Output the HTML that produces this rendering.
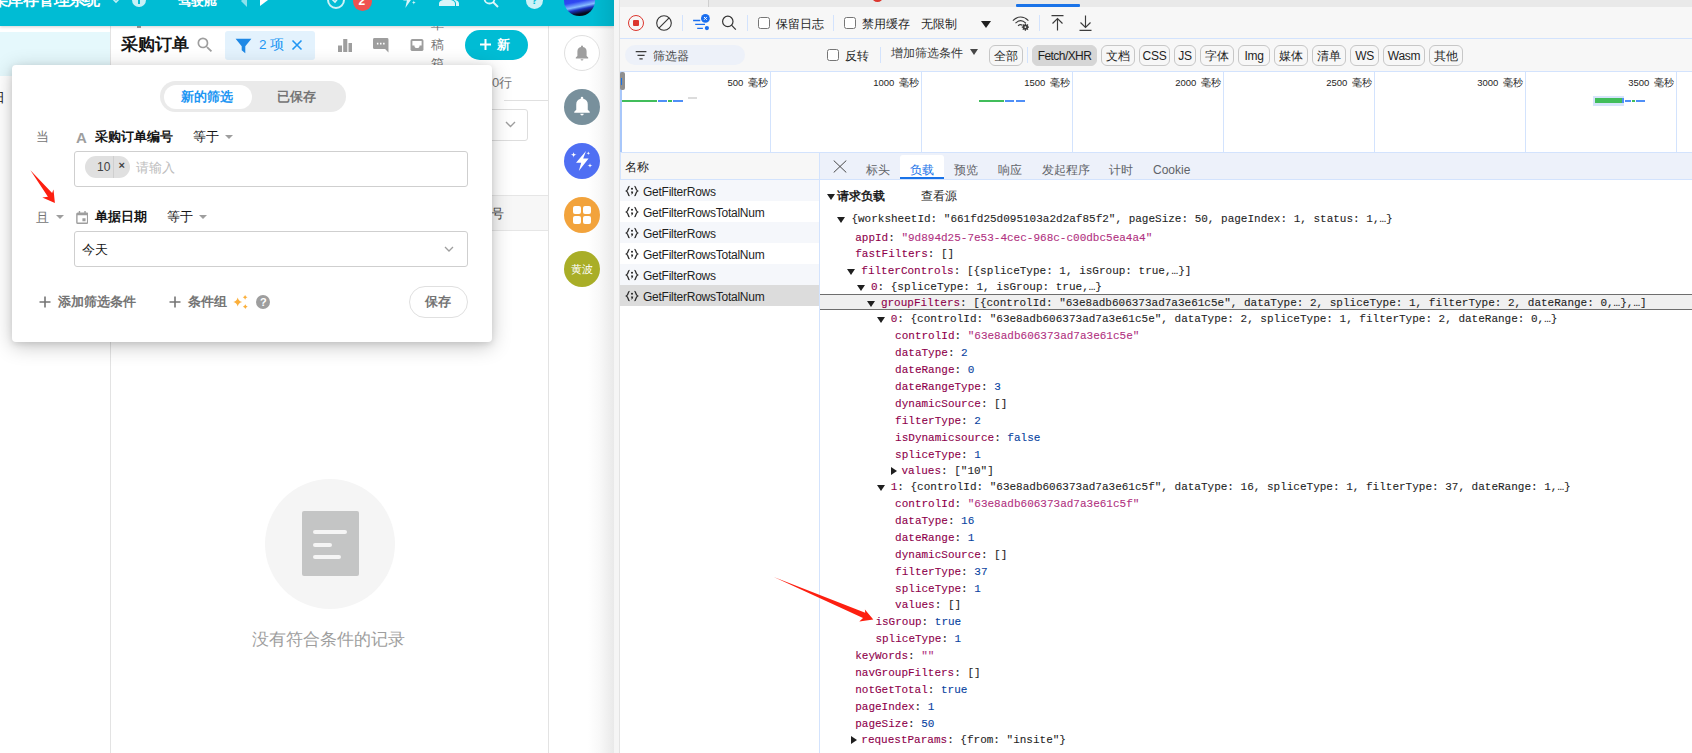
<!DOCTYPE html>
<html lang="zh">
<head>
<meta charset="utf-8">
<title>采购订单</title>
<style>
*{box-sizing:border-box;margin:0;padding:0}
html,body{width:1692px;height:753px;overflow:hidden;background:#fff}
body{position:relative;font-family:"Liberation Sans",sans-serif;font-size:12px;color:#1f1f1f}
.a{position:absolute;white-space:nowrap}
.t{position:absolute;white-space:nowrap;line-height:1}
/* ---------- left app ---------- */
#app{left:0;top:0;width:614px;height:753px;background:#fff;overflow:hidden}
#topbar{left:0;top:0;width:614px;height:26px;background:#00bcd4;box-shadow:0 1px 3px rgba(0,0,0,.18)}
#leftsel{left:0;top:32px;width:110px;height:44px;background:#e5f8fc}
.vline{width:1px;background:#e3e3e3}
#panel{left:12px;top:65px;width:480px;height:277px;background:#fff;border-radius:4px;box-shadow:0 4px 20px rgba(0,0,0,.23),0 2px 6px rgba(0,0,0,.1)}
.g7{color:#757575}
.g9{color:#9e9e9e}
.b{font-weight:bold}
.box{border:1px solid #cfcfcf;border-radius:3px;background:#fff}
.circ{border-radius:50%}
/* ---------- devtools ---------- */
#dt{left:620px;top:0;width:1072px;height:753px;background:#fff;overflow:hidden}
.sep{width:1px;background:#d3e3fd}
.hl{height:1px;background:#d3e3fd}
.cb{width:12px;height:12px;border:1px solid #767676;border-radius:2.5px;background:#fff}
.chip{height:21px;border:1px solid #c7c7c7;border-radius:6px;top:45px;text-align:center;line-height:21px;font-size:12px;color:#1f1f1f}
.chip.l{letter-spacing:-.3px}
.row{left:0;width:199px;height:21px}
.tl{top:78px;font-size:9.500px;text-align:right;color:#1f1f1f;word-spacing:2px}
.tb{top:164px;font-size:12px;color:#5f6368}
.nm{font-size:12px;letter-spacing:-.25px}
.mono{font-family:"Liberation Mono",monospace;font-size:11px;line-height:13px;color:#1f1f1f;-webkit-text-stroke:.1px}
.k{color:#8e004b}
.s{color:#b1317f}
.n{color:#0842a0}
.tri{width:0;height:0;border-left:4px solid transparent;border-right:4px solid transparent;border-top:6px solid #1f1f1f}
.trir{width:0;height:0;border-top:4px solid transparent;border-bottom:4px solid transparent;border-left:6px solid #1f1f1f}
</style>
</head>
<body>
<!-- ================= LEFT APP ================= -->
<div id="app" class="a">
<!-- left nav -->
<div id="leftsel" class="a"></div>
<div class="t" style="left:-8px;top:91px;font-size:13px;color:#151515">日</div>
<div class="a vline" style="left:110px;top:26px;height:727px"></div>
<!-- main header -->
<div class="a" style="left:137px;top:26px;width:4px;height:2px;background:#9e9e9e"></div>
<div class="t b" style="left:121px;top:36px;font-size:17px;color:#151515">采购订单</div>
<svg class="a" style="left:194.500px;top:34.500px" width="20" height="20" viewBox="0 0 24 24"><path fill="#9e9e9e" d="M15.5 14h-.79l-.28-.27A6.47 6.47 0 0 0 16 9.5 6.5 6.5 0 1 0 9.500 16c1.610 0 3.090-.590 4.230-1.570l.27.28v.79l5 4.990L20.490 19l-4.990-5zm-6 0C7.010 14 5 11.990 5 9.500S7.010 5 9.500 5 14 7.010 14 9.500 11.990 14 9.500 14z"/></svg>
<div class="a" style="left:225px;top:31px;width:90px;height:29px;background:#e3f2fd;border-radius:3px"></div>
<svg class="a" style="left:235px;top:38px" width="17" height="16" viewBox="0 0 17 16"><path fill="#1e88e5" d="M0.600 0.800H16.400L10.300 8.200V15.200L6.700 12.300V8.200Z"/></svg>
<div class="t" style="left:259px;top:38px;font-size:13.500px;color:#2196f3">2 项</div>
<svg class="a" style="left:291px;top:39px" width="12" height="12" viewBox="0 0 12 12"><path stroke="#2196f3" stroke-width="1.600" fill="none" d="M1.500 1.500L10.500 10.500M10.500 1.500L1.500 10.500"/></svg>
<!-- header icons -->
<svg class="a" style="left:338px;top:38.500px" width="14" height="13.400" viewBox="0 0 14 13.400"><path fill="#9e9e9e" d="M0 6.500h4v6.900H0zM5.200 0h4.100v13.400H5.200zM10.500 4H14v9.400h-3.500z"/></svg>
<svg class="a" style="left:373px;top:38px" width="15.500" height="14.500" viewBox="0 0 16 15"><path fill="#9e9e9e" d="M1.500 0h13A1.500 1.500 0 0 1 16 1.500V15l-3.500-3.500h-11A1.500 1.500 0 0 1 0 10V1.500A1.500 1.500 0 0 1 1.500 0z"/><path fill="#fff" d="M4 5h1.600v1.600H4zM7.200 5h1.600v1.600H7.200zM10.400 5h1.600v1.600h-1.600z"/></svg>
<svg class="a" style="left:410px;top:39px" width="14" height="12" viewBox="0 0 14 13"><path fill="#9e9e9e" d="M2 0h10a2 2 0 0 1 2 2v9a2 2 0 0 1-2 2H2a2 2 0 0 1-2-2V2a2 2 0 0 1 2-2z"/><path fill="#fff" d="M2 2.200h10V7H9.800a2.800 2.800 0 0 1-5.600 0H2z"/></svg>
<div class="t g7" style="left:430.500px;top:15px;font-size:13px;line-height:19.500px;white-space:normal;width:13px">草稿箱</div>
<div class="a" style="left:465px;top:30px;width:63px;height:30px;border-radius:15px;background:#00bcd4"></div>
<svg class="a" style="left:479px;top:38px" width="13" height="13" viewBox="0 0 13 13"><path stroke="#fff" stroke-width="2" fill="none" d="M6.500 1v11M1 6.500h11"/></svg>
<div class="t b" style="left:497px;top:38px;font-size:13px;color:#fff">新</div>
<!-- content behind panel -->
<div class="t g7" style="left:492px;top:76px;font-size:13px">0行</div>
<div class="a" style="left:504px;top:100px;width:44px;height:1px;background:#e0e0e0"></div>
<div class="a box" style="left:430px;top:109px;width:98px;height:32px;border-color:#ddd"></div>
<svg class="a" style="left:505px;top:121px" width="11" height="7" viewBox="0 0 11 7"><path stroke="#9e9e9e" stroke-width="1.400" fill="none" d="M1 1l4.500 4.500L10 1"/></svg>
<div class="a" style="left:111px;top:195px;width:437px;height:36px;background:#f7f7f7;border-top:1px solid #e6e6e6;border-bottom:1px solid #e6e6e6"></div>
<div class="t" style="left:491px;top:207px;font-size:13px;color:#424242">号</div>
<!-- empty state -->
<div class="a circ" style="left:265px;top:479px;width:130px;height:130px;background:#f5f5f5"></div>
<div class="a" style="left:302px;top:511px;width:57px;height:65px;background:#c4c5c5;border-radius:2px"></div>
<div class="a" style="left:313px;top:530px;width:34px;height:4px;border-radius:2px;background:#f5f5f5"></div>
<div class="a" style="left:313px;top:543px;width:19px;height:4px;border-radius:2px;background:#f5f5f5"></div>
<div class="a" style="left:313px;top:555px;width:28px;height:4px;border-radius:2px;background:#f5f5f5"></div>
<div class="t g9" style="left:252px;top:631px;font-size:17px">没有符合条件的记录</div>
<!-- right sidebar -->
<div class="a vline" style="left:548px;top:26px;height:727px"></div>
<div class="a" style="left:588px;top:26px;width:26px;height:727px;background:linear-gradient(90deg,#fff 0,#f8f8f8 45%,#e9e9e9 100%)"></div>
<div class="a circ" style="left:564px;top:35px;width:36px;height:36px;border:1px solid #e0e0e0;background:#fff"></div>
<svg class="a" style="left:575px;top:45px" width="14" height="16" viewBox="0 0 14 16"><path fill="#9e9e9e" d="M7 0.500a1 1 0 0 1 1 1v.6A4.600 4.600 0 0 1 11.600 6.600V11l1.600 1.600v.8H.8v-.8L2.400 11V6.600A4.600 4.600 0 0 1 6 2.100V1.500a1 1 0 0 1 1-1zM5.600 14.200h2.800a1.400 1.400 0 0 1-2.800 0z"/></svg>
<div class="a circ" style="left:564px;top:88.500px;width:36px;height:36px;background:#78909c"></div>
<svg class="a" style="left:573px;top:96px" width="18" height="20" viewBox="0 0 14 16"><path fill="#fff" d="M7 0.500a1 1 0 0 1 1 1v.6A4.600 4.600 0 0 1 11.600 6.600V11l1.600 1.600v.8H.8v-.8L2.400 11V6.600A4.600 4.600 0 0 1 6 2.100V1.500a1 1 0 0 1 1-1zM5.600 14.200h2.800a1.400 1.400 0 0 1-2.800 0z"/></svg>
<div class="a circ" style="left:564px;top:143px;width:36px;height:36px;background:#4f6ff3"></div>
<svg class="a" style="left:570px;top:149px" width="24" height="24" viewBox="0 0 24 24"><path fill="#fff" d="M16 2L6 13.800h5.200L8.800 22l9.800-12.600h-5.400z"/><path fill="#fff" d="M3.6 2.7Q3.6 5.7 6.6 5.7Q3.6 5.7 3.6 8.7Q3.6 5.7 0.6 5.7Q3.6 5.7 3.6 2.7ZM18.3 2.4Q18.3 4.2 20.1 4.2Q18.3 4.2 18.3 6Q18.3 4.2 16.5 4.2Q18.3 4.2 18.3 2.4ZM20 14.1Q20 16.6 22.5 16.6Q20 16.6 20 19.1Q20 16.6 17.5 16.6Q20 16.6 20 14.1Z"/></svg>
<div class="a circ" style="left:564px;top:197px;width:36px;height:36px;background:#f2a33c"></div>
<div class="a" style="left:573px;top:206px;width:8px;height:8px;background:#fff;border-radius:2px"></div>
<div class="a" style="left:583px;top:206px;width:8px;height:8px;background:#fff;border-radius:2px"></div>
<div class="a" style="left:573px;top:216px;width:8px;height:8px;background:#fff;border-radius:2px"></div>
<div class="a" style="left:583px;top:216px;width:8px;height:8px;background:#fff;border-radius:2px"></div>
<div class="a circ" style="left:564px;top:251px;width:36px;height:36px;background:#a9ae27"></div>
<div class="t" style="left:571px;top:264px;font-size:11px;color:#fff;letter-spacing:-.5px">黄波</div>
<!-- top bar -->
<div id="topbar" class="a"></div>
<div class="a" style="left:592px;top:0;width:22px;height:26px;background:linear-gradient(90deg,rgba(0,0,0,0),rgba(0,0,0,.085))"></div>
<div class="t b" style="left:-8px;top:-8.500px;font-size:16px;color:#fff;letter-spacing:-.6px">某库存管理系统</div>
<svg class="a" style="left:111px;top:-3px" width="10" height="7" viewBox="0 0 10 7"><path stroke="rgba(255,255,255,.75)" stroke-width="1.600" fill="none" d="M1 1l4 4 4-4"/></svg>
<div class="a circ" style="left:132px;top:-7.500px;width:14px;height:14px;background:rgba(255,255,255,.78)"></div>
<div class="a" style="left:138.200px;top:-2px;width:1.600px;height:5.500px;background:#00bcd4"></div>
<div class="t b" style="left:177.500px;top:-6.500px;font-size:13px;color:#fff">驾驶舱</div>
<div class="a" style="left:241px;top:-5.500px;width:0;height:0;border-top:6px solid transparent;border-bottom:6px solid transparent;border-right:6.500px solid rgba(255,255,255,.55)"></div>
<div class="a" style="left:259.500px;top:-6px;width:0;height:0;border-top:6.500px solid transparent;border-bottom:6.500px solid transparent;border-left:8px solid #fff"></div>
<div class="a circ" style="left:327px;top:-9px;width:18px;height:18px;border:2px solid rgba(255,255,255,.8)"></div>
<svg class="a" style="left:331px;top:-3px" width="10" height="8" viewBox="0 0 10 8"><path stroke="rgba(255,255,255,.85)" stroke-width="1.600" fill="none" d="M1 2l3 3 5-6"/></svg>
<div class="a circ" style="left:352.500px;top:-8.500px;width:19px;height:19px;background:#ef5350"></div>
<div class="t b" style="left:358.500px;top:-5px;font-size:12px;color:#fff">2</div>
<svg class="a" style="left:400.500px;top:-9px" width="15" height="17" viewBox="0 0 14 16"><path fill="rgba(255,255,255,.85)" d="M8 0L2 9h3.500L4 16l7-10H7.300z"/><path fill="rgba(255,255,255,.85)" d="M12 9l.5 1.300 1.300.5-1.300.5L12 12.600l-.5-1.300-1.300-.5 1.300-.5z"/></svg>
<svg class="a" style="left:439px;top:-8px" width="20" height="14" viewBox="0 0 20 14"><path fill="rgba(255,255,255,.85)" d="M0 14v-2.500C0 9 4 7.500 8 7.500s8 1.500 8 4V14zM13 7.300c3 .2 7 1.500 7 4.200V14h-3v-2.500c0-1.800-1.500-3.200-4-4.200z"/></svg>
<svg class="a" style="left:483px;top:-8px" width="16" height="16" viewBox="0 0 16 16"><circle cx="6.500" cy="6.500" r="5" stroke="rgba(255,255,255,.85)" stroke-width="1.800" fill="none"/><path stroke="rgba(255,255,255,.85)" stroke-width="2" d="M10 10l5 5"/></svg>
<div class="a circ" style="left:525.500px;top:-8px;width:17px;height:17px;background:rgba(255,255,255,.8)"></div>
<div class="t b" style="left:531px;top:-5px;font-size:11px;color:#00bcd4">?</div>
<div class="a circ" style="left:564px;top:-15px;width:31px;height:31px;background:linear-gradient(168deg,#2630e0 0,#2f48f2 52%,#86bcff 66%,#1a34c4 74%,#070a1c 86%,#030408 100%)"></div>
<!-- filter panel -->
<div id="panel" class="a"></div>
<!-- segmented control -->
<div class="a" style="left:160px;top:81px;width:186px;height:31px;border-radius:16px;background:#eaeaea"></div>
<div class="a" style="left:164px;top:85px;width:88px;height:24px;border-radius:12px;background:#fff"></div>
<div class="t b" style="left:181px;top:90px;font-size:13px;color:#2196f3">新的筛选</div>
<div class="t b g7" style="left:277px;top:90px;font-size:13px">已保存</div>
<!-- row 1 -->
<div class="t g7" style="left:36px;top:130px;font-size:13px">当</div>
<div class="t b g9" style="left:76px;top:130px;font-size:15px">A</div>
<div class="t b" style="left:95px;top:130px;font-size:13px;color:#151515">采购订单编号</div>
<div class="t" style="left:193px;top:130px;font-size:13px;color:#151515">等于</div>
<div class="a" style="left:225px;top:135px;width:0;height:0;border-left:4.500px solid transparent;border-right:4.500px solid transparent;border-top:4.500px solid #9e9e9e"></div>
<div class="a box" style="left:74px;top:151px;width:394px;height:36px"></div>
<div class="a" style="left:85px;top:156px;width:45px;height:22px;border-radius:11px;background:#e0e0e0"></div>
<div class="t" style="left:97px;top:161px;font-size:12px;color:#424242">10</div>
<div class="a" style="left:113px;top:156px;width:1px;height:22px;background:#cfcfcf"></div>
<div class="t b" style="left:118.500px;top:160px;font-size:11px;color:#424242">×</div>
<div class="t" style="left:136px;top:161px;font-size:13px;color:#bdbdbd">请输入</div>
<!-- red arrow 1 -->
<svg class="a" style="left:26px;top:166px" width="34" height="42" viewBox="0 0 34 42"><path fill="#fd1f10" d="M4.400 4.200L26.100 27L27.500 23.600L28.900 37L16.300 31.500L21.900 30.700Z"/></svg>
<!-- row 2 -->
<div class="t g7" style="left:36px;top:211px;font-size:13px">且</div>
<div class="a" style="left:56px;top:215px;width:0;height:0;border-left:4.500px solid transparent;border-right:4.500px solid transparent;border-top:4.500px solid #9e9e9e"></div>
<svg class="a" style="left:75.500px;top:211px" width="12.500" height="13" viewBox="0 0 14 15"><path fill="#9e9e9e" d="M3 0h1.600v1.600h4.800V0H11v1.600h1.200A1.800 1.800 0 0 1 14 3.400v9.800A1.800 1.800 0 0 1 12.200 15H1.800A1.800 1.800 0 0 1 0 13.200V3.400A1.800 1.800 0 0 1 1.800 1.600H3zM1.600 5v8.200h10.800V5zM7.200 8.400h3.600v3.400H7.200z"/></svg>
<div class="t b" style="left:95px;top:210px;font-size:13px;color:#151515">单据日期</div>
<div class="t" style="left:167px;top:210px;font-size:13px;color:#151515">等于</div>
<div class="a" style="left:199px;top:215px;width:0;height:0;border-left:4.500px solid transparent;border-right:4.500px solid transparent;border-top:4.500px solid #9e9e9e"></div>
<div class="a box" style="left:74px;top:231px;width:394px;height:36px"></div>
<div class="t" style="left:82px;top:243px;font-size:13px;color:#151515">今天</div>
<svg class="a" style="left:444px;top:246px" width="10" height="6" viewBox="0 0 10 6"><path stroke="#9e9e9e" stroke-width="1.300" fill="none" d="M1 1l4 4 4-4"/></svg>
<!-- footer -->
<svg class="a" style="left:39px;top:296px" width="12" height="12" viewBox="0 0 12 12"><path stroke="#757575" stroke-width="1.600" fill="none" d="M6 .5v11M.5 6h11"/></svg>
<div class="t b g7" style="left:58px;top:295px;font-size:13px">添加筛选条件</div>
<svg class="a" style="left:169px;top:296px" width="12" height="12" viewBox="0 0 12 12"><path stroke="#757575" stroke-width="1.600" fill="none" d="M6 .5v11M.5 6h11"/></svg>
<div class="t b g7" style="left:188px;top:295px;font-size:13px">条件组</div>
<svg class="a" style="left:233px;top:293px" width="16" height="18" viewBox="0 0 16 18"><path fill="#fbaf3a" d="M4.7 4.4Q5.6 8.0 9.2 8.9Q5.6 9.8 4.7 13.4Q3.8 9.8 0.2 8.9Q3.8 8.0 4.7 4.4ZM12.1 1.9Q12.6 3.8 14.5 4.3Q12.6 4.8 12.1 6.7Q11.6 4.8 9.7 4.3Q11.6 3.8 12.1 1.9ZM12.3 11.3Q12.8 13.2 14.7 13.7Q12.8 14.2 12.3 16.1Q11.8 14.2 9.9 13.7Q11.8 13.2 12.3 11.3Z"/></svg>
<div class="a circ" style="left:256px;top:295px;width:14px;height:14px;background:#9e9e9e"></div>
<div class="t b" style="left:260px;top:297px;font-size:11px;color:#fff">?</div>
<div class="a" style="left:408.500px;top:286px;width:59.500px;height:31.500px;border-radius:16px;border:1px solid #e0e0e0;background:#fff"></div>
<div class="t b g7" style="left:425px;top:295px;font-size:13px">保存</div>
</div>
<!-- splitter strip -->
<div class="a" style="left:614px;top:0;width:5px;height:753px;background:#f5f5f5"></div>
<div class="a" style="left:619px;top:0;width:1px;height:753px;background:#e3e3e3"></div>
<!-- ================= DEVTOOLS ================= -->
<div id="dt" class="a">
<div class="a" style="left:0;top:0;width:1072px;height:753px;background:#fff"></div>
<!-- top band -->
<div class="a" style="left:0;top:0;width:1072px;height:7px;background:#e9e9e9"></div>
<div class="a" style="left:0;top:0;width:88px;height:7px;background:#eeeeee"></div>
<div class="a" style="left:88px;top:0;width:1px;height:7px;background:#cfcfcf"></div>
<div class="a circ" style="left:252px;top:-9px;width:11px;height:11px;background:#dc362e"></div>
<div class="a" style="left:396px;top:0;width:64px;height:7px;background:#ebebeb"></div>
<div class="a" style="left:396px;top:4px;width:64px;height:3px;background:#1a73e8;border-radius:1px"></div>
<!-- toolbar -->
<div class="a" style="left:0;top:7px;width:1072px;height:31px;background:#f7f7f7"></div>
<div class="a hl" style="left:0;top:38px;width:1072px"></div>
<div class="a circ" style="left:8px;top:15px;width:16px;height:16px;border:1.400px solid #dc362e"></div>
<div class="a" style="left:13.100px;top:20.100px;width:5.800px;height:5.800px;background:#dc362e;border-radius:1px"></div>
<svg class="a" style="left:36px;top:15px" width="16" height="16" viewBox="0 0 16 16"><circle cx="8" cy="8" r="7.300" stroke="#333" stroke-width="1.100" fill="none"/><path stroke="#333" stroke-width="1.100" d="M2.900 13.100L13.100 2.900"/></svg>
<div class="a sep" style="left:62px;top:15px;height:16px"></div>
<svg class="a" style="left:72px;top:13px" width="20" height="20" viewBox="0 0 20 20"><path stroke="#1a6ff0" stroke-width="1.300" fill="none" d="M1.100 7.500h7.200M3.200 11.300h9.800M5.200 15.400h5.700"/><circle cx="13.400" cy="5.400" r="4.400" fill="#1a6ff0"/><path stroke="#fff" stroke-width="1" d="M12 4l2.800 2.800M14.800 4L12 6.800"/><circle cx="14.900" cy="15.100" r="2.100" fill="#1a6ff0"/></svg>
<svg class="a" style="left:100px;top:14px" width="17" height="17" viewBox="0 0 17 17"><circle cx="7.800" cy="7.400" r="5.200" stroke="#333" stroke-width="1.200" fill="none"/><path stroke="#333" stroke-width="1.200" d="M11.500 11.100l4.300 4.600"/></svg>
<div class="a sep" style="left:127px;top:15px;height:16px"></div>
<div class="a cb" style="left:138px;top:17px"></div>
<div class="t" style="left:156px;top:18px;font-size:12px">保留日志</div>
<div class="a sep" style="left:213px;top:15px;height:16px"></div>
<div class="a cb" style="left:224px;top:17px"></div>
<div class="t" style="left:242px;top:18px;font-size:12px">禁用缓存</div>
<div class="t" style="left:301px;top:18px;font-size:12px">无限制</div>
<div class="a" style="left:361px;top:21px;width:0;height:0;border-left:5.500px solid transparent;border-right:5.500px solid transparent;border-top:7px solid #1f1f1f"></div>
<svg class="a" style="left:392px;top:15px" width="19" height="16.400" viewBox="0 0 22 19"><path stroke="#3c3c3c" stroke-width="1.300" fill="none" d="M1 6.500C6.500 1 13.500 1 19 6.500M4 9.500C8 5.500 12 5.500 16 9.500M7 12.500C8.800 10.700 10.500 10.700 12 12"/><circle cx="15.500" cy="14" r="3.100" fill="#3c3c3c"/><circle cx="15.500" cy="14" r="1.100" fill="#f7f7f7"/><path stroke="#3c3c3c" stroke-width="1.500" d="M15.500 9.800v8.400M11.300 14h8.400M12.500 11l6 6M18.500 11l-6 6"/><circle cx="15.500" cy="14" r="1.100" fill="#f7f7f7"/></svg>
<div class="a sep" style="left:419px;top:15px;height:16px"></div>
<svg class="a" style="left:430px;top:15px" width="15" height="16" viewBox="0 0 15 16"><path stroke="#3c3c3c" stroke-width="1.150" fill="none" d="M1.500 .6h12M7.500 3.500v12M2.500 8.500l5-5 5 5"/></svg>
<svg class="a" style="left:458px;top:15px" width="15" height="16" viewBox="0 0 15 16"><path stroke="#3c3c3c" stroke-width="1.150" fill="none" d="M1.500 15.400h12M7.500 .5v12M2.500 7.500l5 5 5-5"/></svg>
<!-- filter bar -->
<div class="a" style="left:0;top:39px;width:1072px;height:32px;background:#f7f7f7"></div>
<div class="a hl" style="left:0;top:71px;width:1072px"></div>
<div class="a" style="left:5px;top:45px;width:120px;height:20px;border-radius:10px;background:#edf1f9"></div>
<svg class="a" style="left:15px;top:50px" width="12" height="10" viewBox="0 0 12 10"><path stroke="#3c3c3c" stroke-width="1.300" fill="none" d="M.7 1.600h10.700M2.500 5.400h7.100M4.400 8.800h3.300"/></svg>
<div class="t" style="left:33px;top:50px;font-size:12px;color:#474747">筛选器</div>
<div class="a cb" style="left:207px;top:49px"></div>
<div class="t" style="left:225px;top:50px;font-size:12px">反转</div>
<div class="a sep" style="left:260px;top:47px;height:16px"></div>
<div class="t" style="left:271px;top:46.500px;font-size:12px;color:#3c3c3c">增加筛选条件</div>
<div class="a" style="left:350px;top:49px;width:0;height:0;border-left:4px solid transparent;border-right:4px solid transparent;border-top:6px solid #474747"></div>
<div class="a chip" style="left:369px;width:34px">全部</div>
<div class="a sep" style="left:407px;top:47px;height:16px"></div>
<div class="a chip" style="left:412px;width:65px;background:#d6d6d6;border-color:#d6d6d6;letter-spacing:-.55px">Fetch/XHR</div>
<div class="a chip" style="left:481px;width:34px">文档</div>
<div class="a chip l" style="left:519px;width:31px">CSS</div>
<div class="a chip l" style="left:554px;width:22px">JS</div>
<div class="a chip" style="left:580px;width:34px">字体</div>
<div class="a chip l" style="left:618px;width:32px">Img</div>
<div class="a chip" style="left:654px;width:34px">媒体</div>
<div class="a chip" style="left:692px;width:34px">清单</div>
<div class="a chip l" style="left:730px;width:29px">WS</div>
<div class="a chip l" style="left:763px;width:42px">Wasm</div>
<div class="a chip" style="left:809px;width:34px">其他</div>
<!-- timeline overview -->
<div class="a" style="left:0;top:72px;width:2px;height:80px;background:#a8c7fa"></div>
<div class="a" style="left:0;top:72px;width:4.500px;height:18px;background:#8f8f8f;border-radius:2px"></div>
<div class="a" style="left:1.300px;top:77.500px;width:1.200px;height:7.500px;background:#1a73e8"></div>
<div class="a sep" style="left:150px;top:72px;height:80px"></div>
<div class="a sep" style="left:301px;top:72px;height:80px"></div>
<div class="a sep" style="left:452px;top:72px;height:80px"></div>
<div class="a sep" style="left:603px;top:72px;height:80px"></div>
<div class="a sep" style="left:754px;top:72px;height:80px"></div>
<div class="a sep" style="left:905px;top:72px;height:80px"></div>
<div class="a sep" style="left:1056px;top:72px;height:80px"></div>
<div class="t tl" style="left:50px;width:98px">500 毫秒</div>
<div class="t tl" style="left:201px;width:98px">1000 毫秒</div>
<div class="t tl" style="left:352px;width:98px">1500 毫秒</div>
<div class="t tl" style="left:503px;width:98px">2000 毫秒</div>
<div class="t tl" style="left:654px;width:98px">2500 毫秒</div>
<div class="t tl" style="left:805px;width:98px">3000 毫秒</div>
<div class="t tl" style="left:956px;width:98px">3500 毫秒</div>
<div class="a" style="left:2px;top:100px;width:35px;height:2px;background:#41bd5b"></div>
<div class="a" style="left:38px;top:100px;width:9px;height:2px;background:#4f8ff7"></div>
<div class="a" style="left:48px;top:100px;width:4px;height:2px;background:#41bd5b"></div>
<div class="a" style="left:53px;top:100px;width:10px;height:2px;background:#4f8ff7"></div>
<div class="a" style="left:68px;top:97px;width:9px;height:2px;background:#dcdcdc"></div>
<div class="a" style="left:359px;top:100px;width:25px;height:2px;background:#41bd5b"></div>
<div class="a" style="left:385px;top:100px;width:9px;height:2px;background:#4f8ff7"></div>
<div class="a" style="left:396px;top:100px;width:9px;height:2px;background:#4f8ff7"></div>
<div class="a" style="left:973px;top:96px;width:31px;height:10px;background:#d6e4fb"></div>
<div class="a" style="left:975px;top:98px;width:27px;height:5px;background:#41bd5b"></div>
<div class="a" style="left:1002px;top:98px;width:2px;height:5px;background:#4f8ff7"></div>
<div class="a" style="left:1005px;top:100px;width:6px;height:2px;background:#4f8ff7"></div>
<div class="a" style="left:1012px;top:100px;width:3px;height:2px;background:#41bd5b"></div>
<div class="a" style="left:1016px;top:100px;width:9px;height:2px;background:#4f8ff7"></div>
<div class="a hl" style="left:0;top:152px;width:1072px"></div>

<!-- network list -->
<div class="a" style="left:0;top:153px;width:199px;height:26px;background:#f7f7f7"></div>
<div class="a" style="left:0;top:153px;width:1px;height:26px;background:#d3e3fd"></div>
<div class="t" style="left:5px;top:161px;font-size:12px">名称</div>
<div class="a hl" style="left:0;top:179px;width:1072px"></div>
<div class="a row" style="top:180px;background:#f5f7fb"></div>
<svg class="a" style="left:5px;top:185px" width="14" height="12" viewBox="0 0 14 12"><path stroke="#2b2b2b" stroke-width="1.250" fill="none" d="M4.600 1.300C2.700 1.300 3.900 4.700 1.300 6 3.900 7.300 2.700 10.700 4.600 10.700M9.400 1.300c1.900 0 .7 3.400 3.300 4.700-2.600 1.300-1.400 4.700-3.300 4.700"/><circle cx="7" cy="3.800" r="1.050" fill="#2b2b2b"/><path fill="#2b2b2b" d="M6 6.600h2.100c.2 1.500-.5 2.500-1.700 3l-.4-.7c.6-.3.900-.7.900-1.200H6z"/></svg>
<div class="t nm" style="left:23px;top:186px">GetFilterRows</div>
<div class="a row" style="top:201px;background:#fff"></div>
<svg class="a" style="left:5px;top:206px" width="14" height="12" viewBox="0 0 14 12"><path stroke="#2b2b2b" stroke-width="1.250" fill="none" d="M4.600 1.300C2.700 1.300 3.900 4.700 1.300 6 3.900 7.300 2.700 10.700 4.600 10.700M9.400 1.300c1.900 0 .7 3.400 3.300 4.700-2.600 1.300-1.400 4.700-3.300 4.700"/><circle cx="7" cy="3.800" r="1.050" fill="#2b2b2b"/><path fill="#2b2b2b" d="M6 6.600h2.100c.2 1.500-.5 2.500-1.700 3l-.4-.7c.6-.3.900-.7.900-1.200H6z"/></svg>
<div class="t nm" style="left:23px;top:207px">GetFilterRowsTotalNum</div>
<div class="a row" style="top:222px;background:#f5f7fb"></div>
<svg class="a" style="left:5px;top:227px" width="14" height="12" viewBox="0 0 14 12"><path stroke="#2b2b2b" stroke-width="1.250" fill="none" d="M4.600 1.300C2.700 1.300 3.900 4.700 1.300 6 3.900 7.300 2.700 10.700 4.600 10.700M9.400 1.300c1.900 0 .7 3.400 3.300 4.700-2.600 1.300-1.400 4.700-3.300 4.700"/><circle cx="7" cy="3.800" r="1.050" fill="#2b2b2b"/><path fill="#2b2b2b" d="M6 6.600h2.100c.2 1.500-.5 2.500-1.700 3l-.4-.7c.6-.3.900-.7.900-1.200H6z"/></svg>
<div class="t nm" style="left:23px;top:228px">GetFilterRows</div>
<div class="a row" style="top:243px;background:#fff"></div>
<svg class="a" style="left:5px;top:248px" width="14" height="12" viewBox="0 0 14 12"><path stroke="#2b2b2b" stroke-width="1.250" fill="none" d="M4.600 1.300C2.700 1.300 3.900 4.700 1.300 6 3.900 7.300 2.700 10.700 4.600 10.700M9.400 1.300c1.900 0 .7 3.400 3.300 4.700-2.600 1.300-1.400 4.700-3.300 4.700"/><circle cx="7" cy="3.800" r="1.050" fill="#2b2b2b"/><path fill="#2b2b2b" d="M6 6.600h2.100c.2 1.500-.5 2.500-1.700 3l-.4-.7c.6-.3.900-.7.900-1.200H6z"/></svg>
<div class="t nm" style="left:23px;top:249px">GetFilterRowsTotalNum</div>
<div class="a row" style="top:264px;background:#f5f7fb"></div>
<svg class="a" style="left:5px;top:269px" width="14" height="12" viewBox="0 0 14 12"><path stroke="#2b2b2b" stroke-width="1.250" fill="none" d="M4.600 1.300C2.700 1.300 3.900 4.700 1.300 6 3.900 7.300 2.700 10.700 4.600 10.700M9.400 1.300c1.900 0 .7 3.400 3.300 4.700-2.600 1.300-1.400 4.700-3.300 4.700"/><circle cx="7" cy="3.800" r="1.050" fill="#2b2b2b"/><path fill="#2b2b2b" d="M6 6.600h2.100c.2 1.500-.5 2.500-1.700 3l-.4-.7c.6-.3.900-.7.900-1.200H6z"/></svg>
<div class="t nm" style="left:23px;top:270px">GetFilterRows</div>
<div class="a row" style="top:285px;background:#dcdcdc"></div>
<svg class="a" style="left:5px;top:290px" width="14" height="12" viewBox="0 0 14 12"><path stroke="#2b2b2b" stroke-width="1.250" fill="none" d="M4.600 1.300C2.700 1.300 3.900 4.700 1.300 6 3.900 7.300 2.700 10.700 4.600 10.700M9.400 1.300c1.900 0 .7 3.400 3.300 4.700-2.600 1.300-1.400 4.700-3.300 4.700"/><circle cx="7" cy="3.800" r="1.050" fill="#2b2b2b"/><path fill="#2b2b2b" d="M6 6.600h2.100c.2 1.500-.5 2.500-1.700 3l-.4-.7c.6-.3.900-.7.900-1.200H6z"/></svg>
<div class="t nm" style="left:23px;top:291px">GetFilterRowsTotalNum</div>

<div class="a sep" style="left:199px;top:153px;height:600px"></div>
<!-- detail tabs -->
<div class="a" style="left:200px;top:153px;width:872px;height:26px;background:#edf1fa"></div>
<svg class="a" style="left:213px;top:160px" width="14" height="13" viewBox="0 0 14 13"><path stroke="#474747" stroke-width="1" fill="none" d="M.7.500l12.600 12M13.300.500L.7 12.500"/></svg>
<div class="t tb" style="left:246px">标头</div>
<div class="a" style="left:280px;top:155px;width:44px;height:24px;background:#fff;border-radius:3px 3px 0 0"></div>
<div class="a" style="left:280px;top:177px;width:44px;height:2px;background:#1a73e8"></div>
<div class="t tb" style="left:290px;color:#1a73e8">负载</div>
<div class="t tb" style="left:333.500px">预览</div>
<div class="t tb" style="left:377.500px">响应</div>
<div class="t tb" style="left:421.500px">发起程序</div>
<div class="t tb" style="left:489px">计时</div>
<div class="t tb" style="left:533px">Cookie</div>
<!-- payload -->
<div class="a tri" style="left:207px;top:194px"></div>
<div class="t b" style="left:217px;top:190px;font-size:12px">请求负载</div>
<div class="t" style="left:301px;top:190px;font-size:12px">查看源</div>
<div class="a" style="left:200px;top:294px;width:872px;height:16px;background:#f0f0f0;border-top:1px solid #6e6e6e;border-bottom:1px solid #6e6e6e"></div>
<!--TREE-->
<div class="t mono" style="left:231.4px;top:213px">{worksheetId: "661fd25d095103a2d2af85f2", pageSize: 50, pageIndex: 1, status: 1,…}</div>
<div class="a tri" style="left:217.1px;top:217px"></div>
<div class="t mono" style="left:235.2px;top:232px"><span class="k">appId</span>: <span class="s">"9d894d25-7e53-4cec-968c-c00dbc5ea4a4"</span></div>
<div class="t mono" style="left:235.2px;top:248px"><span class="k">fastFilters</span>: []</div>
<div class="t mono" style="left:241.3px;top:265px"><span class="k">filterControls</span>: [{spliceType: 1, isGroup: true,…}]</div>
<div class="a tri" style="left:227.0px;top:269px"></div>
<div class="t mono" style="left:250.9px;top:281px"><span class="k">0</span>: {spliceType: 1, isGroup: true,…}</div>
<div class="a tri" style="left:236.6px;top:285px"></div>
<div class="t mono" style="left:260.9px;top:297px"><span class="k">groupFilters</span>: [{controlId: "63e8adb606373ad7a3e61c5e", dataType: 2, spliceType: 1, filterType: 2, dateRange: 0,…},…]</div>
<div class="a tri" style="left:246.6px;top:301px"></div>
<div class="t mono" style="left:270.7px;top:313px"><span class="k">0</span>: {controlId: "63e8adb606373ad7a3e61c5e", dataType: 2, spliceType: 1, filterType: 2, dateRange: 0,…}</div>
<div class="a tri" style="left:257.2px;top:317px"></div>
<div class="t mono" style="left:275.1px;top:330px"><span class="k">controlId</span>: <span class="s">"63e8adb606373ad7a3e61c5e"</span></div>
<div class="t mono" style="left:275.1px;top:347px"><span class="k">dataType</span>: <span class="n">2</span></div>
<div class="t mono" style="left:275.1px;top:364px"><span class="k">dateRange</span>: <span class="n">0</span></div>
<div class="t mono" style="left:275.1px;top:381px"><span class="k">dateRangeType</span>: <span class="n">3</span></div>
<div class="t mono" style="left:275.1px;top:398px"><span class="k">dynamicSource</span>: []</div>
<div class="t mono" style="left:275.1px;top:415px"><span class="k">filterType</span>: <span class="n">2</span></div>
<div class="t mono" style="left:275.1px;top:432px"><span class="k">isDynamicsource</span>: <span class="n">false</span></div>
<div class="t mono" style="left:275.1px;top:449px"><span class="k">spliceType</span>: <span class="n">1</span></div>
<div class="t mono" style="left:281.4px;top:465px"><span class="k">values</span>: ["10"]</div>
<div class="a trir" style="left:270.8px;top:467px"></div>
<div class="t mono" style="left:270.7px;top:481px"><span class="k">1</span>: {controlId: "63e8adb606373ad7a3e61c5f", dataType: 16, spliceType: 1, filterType: 37, dateRange: 1,…}</div>
<div class="a tri" style="left:257.2px;top:485px"></div>
<div class="t mono" style="left:275.1px;top:498px"><span class="k">controlId</span>: <span class="s">"63e8adb606373ad7a3e61c5f"</span></div>
<div class="t mono" style="left:275.1px;top:515px"><span class="k">dataType</span>: <span class="n">16</span></div>
<div class="t mono" style="left:275.1px;top:532px"><span class="k">dateRange</span>: <span class="n">1</span></div>
<div class="t mono" style="left:275.1px;top:549px"><span class="k">dynamicSource</span>: []</div>
<div class="t mono" style="left:275.1px;top:566px"><span class="k">filterType</span>: <span class="n">37</span></div>
<div class="t mono" style="left:275.1px;top:583px"><span class="k">spliceType</span>: <span class="n">1</span></div>
<div class="t mono" style="left:275.1px;top:599px"><span class="k">values</span>: []</div>
<div class="t mono" style="left:255.4px;top:616px"><span class="k">isGroup</span>: <span class="n">true</span></div>
<div class="t mono" style="left:255.4px;top:633px"><span class="k">spliceType</span>: <span class="n">1</span></div>
<div class="t mono" style="left:235.2px;top:650px"><span class="k">keyWords</span>: <span class="s">""</span></div>
<div class="t mono" style="left:235.2px;top:667px"><span class="k">navGroupFilters</span>: []</div>
<div class="t mono" style="left:235.2px;top:684px"><span class="k">notGetTotal</span>: <span class="n">true</span></div>
<div class="t mono" style="left:235.2px;top:701px"><span class="k">pageIndex</span>: <span class="n">1</span></div>
<div class="t mono" style="left:235.2px;top:718px"><span class="k">pageSize</span>: <span class="n">50</span></div>
<div class="t mono" style="left:241.3px;top:734px"><span class="k">requestParams</span>: {from: "insite"}</div>
<div class="a trir" style="left:230.7px;top:736px"></div>
<!--/TREE-->
<!-- red arrow 2 -->
<svg class="a" style="left:150px;top:570px" width="110" height="60" viewBox="0 0 110 60"><path fill="#fd1f10" d="M3.800 7.100L95.200 42.800L94.900 39.600L103.300 49.400L89.300 51.500L93 48Z"/></svg>
</div>
</body>
</html>
